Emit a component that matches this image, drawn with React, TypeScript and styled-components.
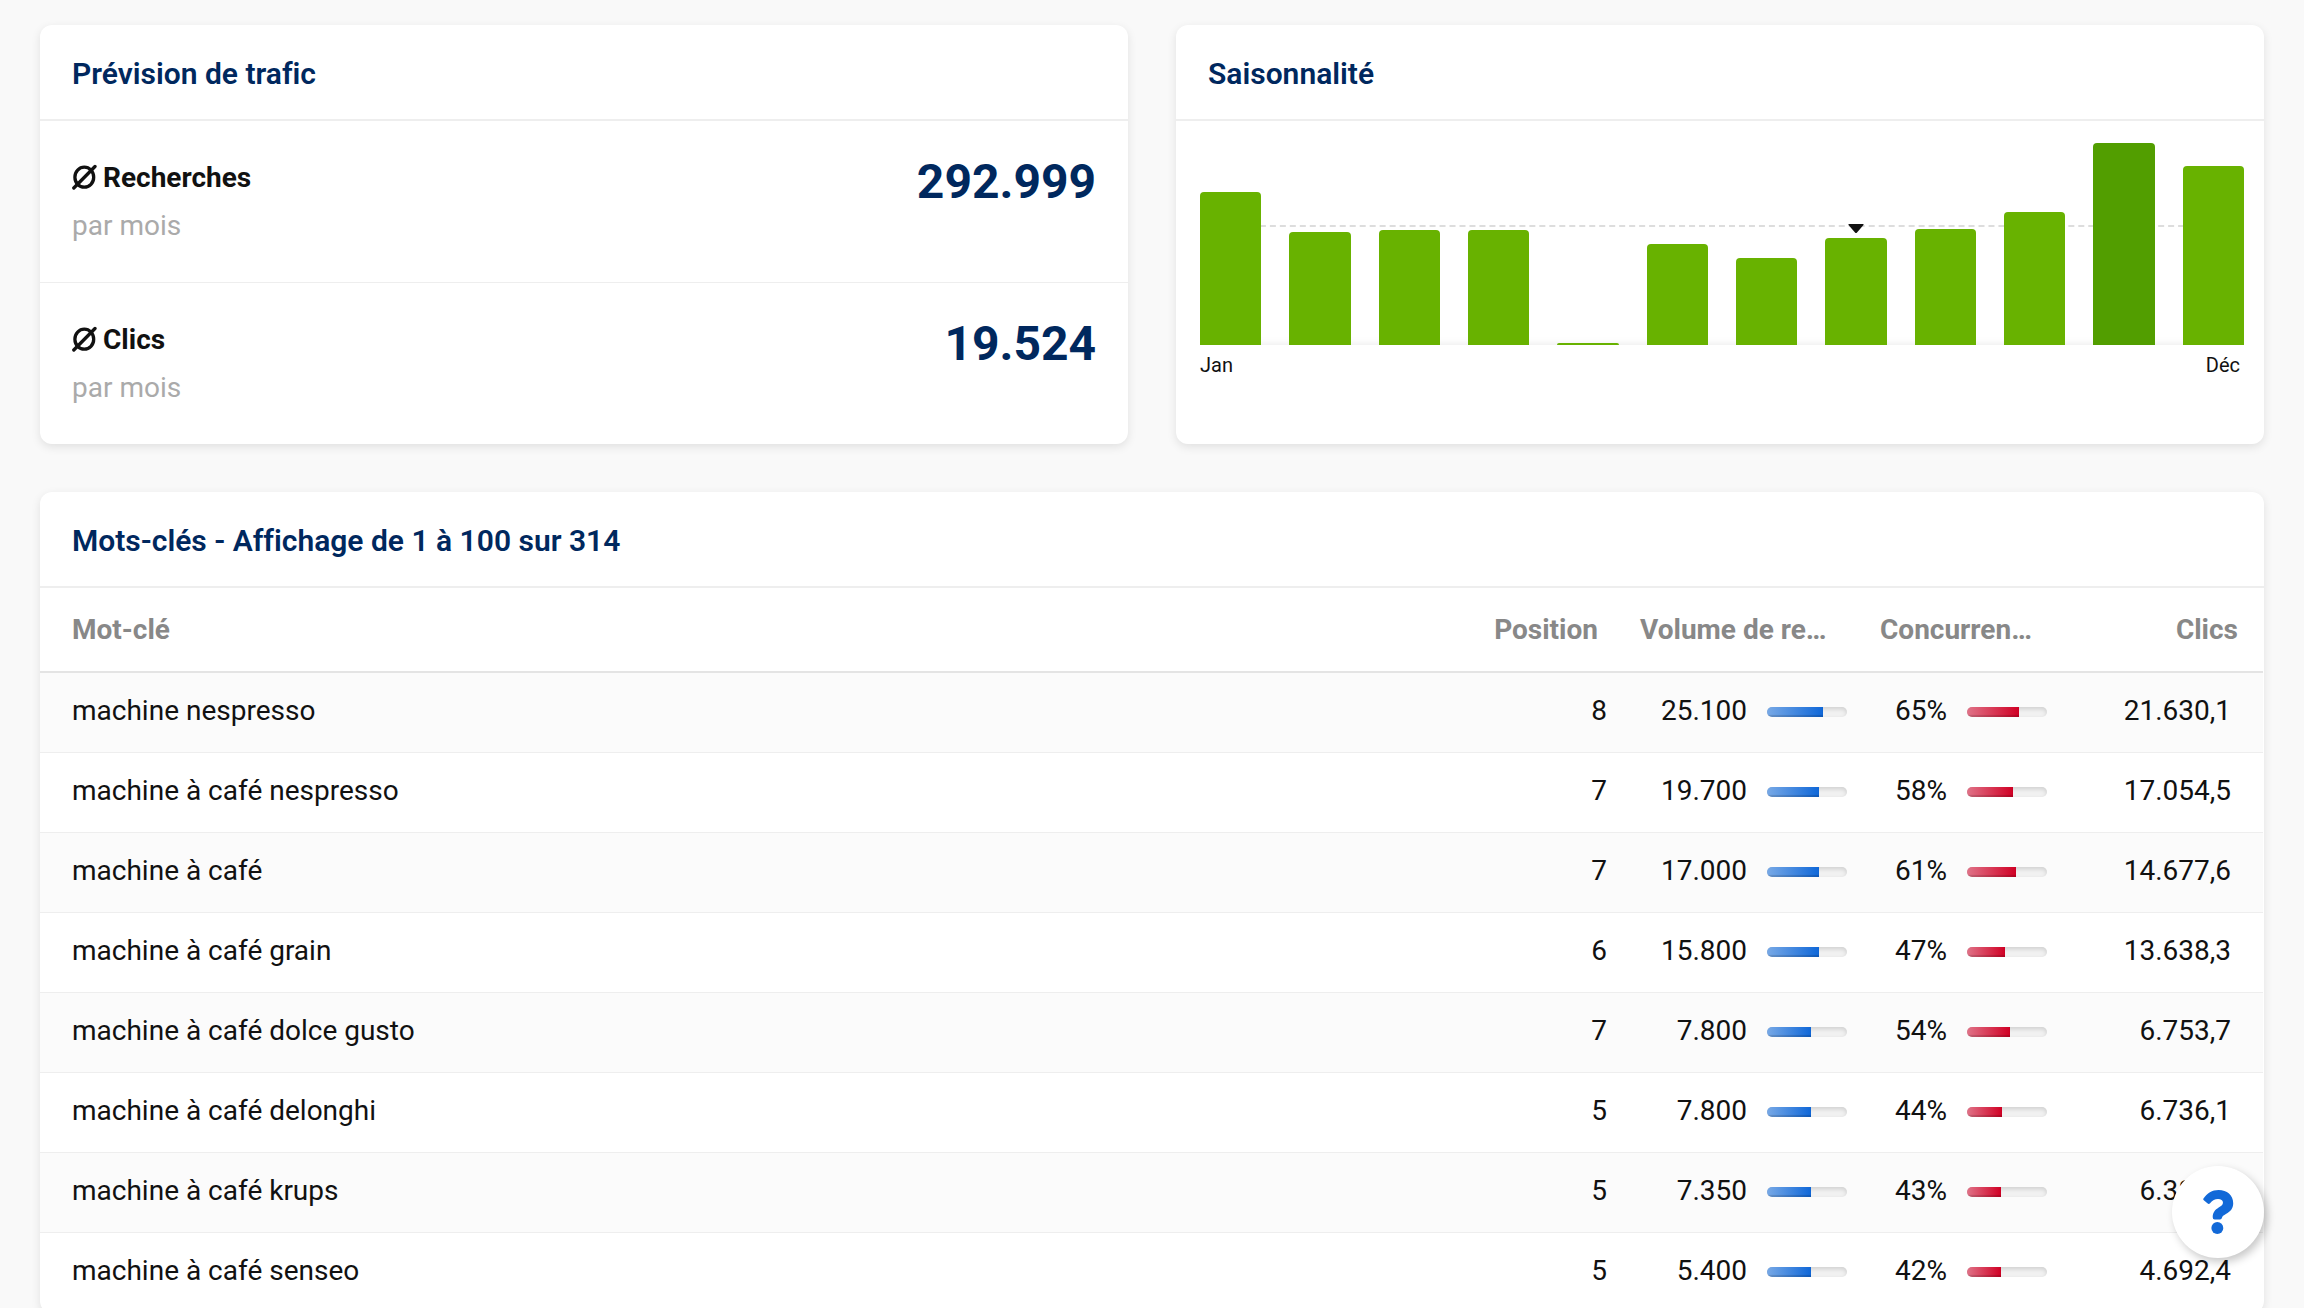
import React from "react";
import styled, { createGlobalStyle } from "styled-components";

const GlobalStyle = createGlobalStyle`
  *, *::before, *::after { box-sizing: border-box; }
  body {
    margin: 0;
    background: #f9f9f9;
    color: #111;
    font-family: Roboto, "Liberation Sans", sans-serif;
    font-size: 28px;
    line-height: 40px;
    -webkit-font-smoothing: antialiased;
  }
`;

const Page = styled.main`
  display: flex;
  flex-direction: column;
  gap: 48px;
  padding: 25px 40px 48px;
`;

const Columns = styled.div`
  display: grid;
  grid-template-columns: 1fr 1fr;
  gap: 48px;
`;

const Card = styled.section`
  background: #fff;
  border-radius: 12px;
  box-shadow: 0 3px 10px rgba(0, 0, 0, 0.1);
`;

const CardTitle = styled.h2`
  margin: 0;
  padding: 29px 32px 25px;
  border-bottom: 2px solid #eee;
  color: #00285e;
  font-size: 30px;
  font-weight: 600;
  font-variant-ligatures: no-common-ligatures;
  line-height: 40px;
`;

const Metric = styled.div`
  display: flex;
  justify-content: space-between;
  padding: 33px 32px 32px;

  & + & {
    border-top: 1px solid #eee;
  }
`;

const MetricName = styled.div`
  display: flex;
  align-items: center;
  gap: 6px;
  height: 48px;
  font-weight: 700;
`;

const MetricUnit = styled.div`
  height: 48px;
  line-height: 48px;
  color: #aaa;
`;

const MetricValue = styled.div`
  color: #00285e;
  font-size: 48px;
  font-weight: 700;
  line-height: 56px;
`;

const Chart = styled.div`
  padding: 22px 20px 0 24px;
`;

const Plot = styled.div`
  position: relative;
  display: grid;
  grid-template-columns: repeat(12, 1fr);
  gap: 28px;
  align-items: end;
  height: 202px;
  box-shadow: inset 0 -10px 8px -10px rgba(0, 0, 0, 0.1);
`;

const Average = styled.div`
  position: absolute;
  left: 0;
  right: 0;
  bottom: 118px;
  border-top: 2px dashed #ddd;
`;

const Bar = styled.div<{ $peak: boolean }>`
  position: relative;
  border-radius: 4px 4px 0 0;
  background: ${(p) => (p.$peak ? "#529e00" : "#68b200")};
`;

const Marker = styled.svg`
  position: absolute;
  left: 50%;
  bottom: 100%;
  width: 16px;
  height: 9px;
  margin: 0 0 5px -8px;
`;

const Axis = styled.div`
  display: flex;
  justify-content: space-between;
  padding: 8px 4px 0 0;
  font-size: 20px;
  line-height: 24px;
`;

const TableWrap = styled.div`
  padding-right: 1px;
`;

const Table = styled.table`
  width: 100%;
  table-layout: fixed;
  border-collapse: separate;
  border-spacing: 0;
`;

const Col = styled.col<{ $width?: number }>`
  width: ${(p) => (p.$width ? `${p.$width}px` : "auto")};
`;

const Th = styled.th<{ $right?: boolean }>`
  height: 85px;
  padding: 0 ${(p) => (p.$right ? 25 : 15)}px 0 17px;
  border-bottom: 2px solid #e4e4e4;
  color: #888;
  font-weight: 700;
  white-space: nowrap;
  text-align: ${(p) => (p.$right ? "right" : "left")};

  &:first-child {
    padding-left: 32px;
  }
`;

const Row = styled.tr`
  &:nth-child(odd) {
    background: #fbfbfb;
  }
`;

const Td = styled.td<{ $right?: boolean }>`
  height: 80px;
  padding: 0 16px 4px;
  border-bottom: 1px solid #eee;
  white-space: nowrap;
  text-align: ${(p) => (p.$right ? "right" : "left")};

  &:first-child {
    padding-left: 32px;
  }

  &:last-child {
    padding-right: 32px;
  }
`;

const Gauge = styled.div`
  display: flex;
  align-items: center;
  justify-content: flex-end;
  gap: 20px;
`;

const Track = styled.div`
  width: 80px;
  height: 10px;
  margin-top: 2px;
  border-radius: 5px;
  overflow: hidden;
  background: #f1f1f1;
  box-shadow: inset 0 2px 4px rgba(0, 0, 0, 0.14);
`;

const Fill = styled.div<{ $tone: "blue" | "red" }>`
  height: 100%;
  box-shadow: inset 0 -2px 1px rgba(0, 0, 0, 0.15);
  background: ${(p) =>
    p.$tone === "blue"
      ? "linear-gradient(90deg, #78a9e6, #0f67d8)"
      : "linear-gradient(90deg, #e07388, #d00024)"};
`;

const HelpButton = styled.button`
  position: fixed;
  right: 40px;
  bottom: 50px;
  display: flex;
  align-items: center;
  justify-content: center;
  width: 92px;
  height: 92px;
  padding: 0;
  border: 0;
  border-radius: 50%;
  background: #fff;
  color: #1269d8;
  box-shadow: 3px 4px 8px rgba(0, 0, 0, 0.22);
  cursor: pointer;
`;

const AverageIcon = () => (
  <svg width="25" height="28" viewBox="0 0 25 28" fill="none" stroke="currentColor" aria-hidden="true">
    <ellipse cx="12.3" cy="13.2" rx="9.4" ry="10" strokeWidth="3.3" />
    <path d="M1.800 24L23 2.500" strokeWidth="3.300" strokeLinecap="round" />
  </svg>
);

const QuestionIcon = () => (
  <svg width="32" height="44" viewBox="38 28 96 133" fill="currentColor" aria-hidden="true">
    <path d="M42 54C53 38 68 28 88 28C113 28 132 43 132 68C132 86 122 93 111 100C102 106 99 107 98 112Q97 117 92 117H76Q70 117 70 110C70 96 77 88 88 81C97 76 101 73 101 66C101 59 95 55 86 55C76 55 70 58 62 68Q58 72 54 68L43 59Q40 57 42 54Z" />
    <circle cx="84" cy="143" r="18" />
  </svg>
);

const metrics = [
  { name: "Recherches", unit: "par mois", value: "292.999" },
  { name: "Clics", unit: "par mois", value: "19.524" },
];

const months = [153, 113, 115, 115, 2, 101, 87, 107, 116, 133, 202, 179];
const peak = Math.max(...months);
const currentMonth = 7;

const keywords = [
  { name: "machine nespresso", position: 8, volume: "25.100", volumeFill: 70, competition: 65, clicks: "21.630,1" },
  { name: "machine à café nespresso", position: 7, volume: "19.700", volumeFill: 65, competition: 58, clicks: "17.054,5" },
  { name: "machine à café", position: 7, volume: "17.000", volumeFill: 65, competition: 61, clicks: "14.677,6" },
  { name: "machine à café grain", position: 6, volume: "15.800", volumeFill: 65, competition: 47, clicks: "13.638,3" },
  { name: "machine à café dolce gusto", position: 7, volume: "7.800", volumeFill: 55, competition: 54, clicks: "6.753,7" },
  { name: "machine à café delonghi", position: 5, volume: "7.800", volumeFill: 55, competition: 44, clicks: "6.736,1" },
  { name: "machine à café krups", position: 5, volume: "7.350", volumeFill: 55, competition: 43, clicks: "6.389,2" },
  { name: "machine à café senseo", position: 5, volume: "5.400", volumeFill: 55, competition: 42, clicks: "4.692,4" },
];

export default function App() {
  return (
    <>
      <GlobalStyle />
      <Page>
        <Columns>
          <Card>
            <CardTitle>Prévision de trafic</CardTitle>
            {metrics.map((m) => (
              <Metric key={m.name}>
                <div>
                  <MetricName>
                    <AverageIcon />
                    {m.name}
                  </MetricName>
                  <MetricUnit>{m.unit}</MetricUnit>
                </div>
                <MetricValue>{m.value}</MetricValue>
              </Metric>
            ))}
          </Card>
          <Card>
            <CardTitle>Saisonnalité</CardTitle>
            <Chart>
              <Plot>
                <Average />
                {months.map((value, i) => (
                  <Bar key={i} $peak={value === peak} style={{ height: `${(value / peak) * 100}%` }}>
                    {i === currentMonth && (
                      <Marker viewBox="0 0 16 9" aria-hidden="true">
                        <path d="M1 0H15Q16 0 15.500 1L9 8.400Q8 9.400 7 8.400L.5 1Q0 0 1 0Z" fill="#111" />
                      </Marker>
                    )}
                  </Bar>
                ))}
              </Plot>
              <Axis>
                <span>Jan</span>
                <span>Déc</span>
              </Axis>
            </Chart>
          </Card>
        </Columns>
        <Card>
          <CardTitle>Mots-clés - Affichage de 1 à 100 sur 314</CardTitle>
          <TableWrap>
            <Table>
              <colgroup>
                <Col />
                <Col $width={160} />
                <Col $width={240} />
                <Col $width={200} />
                <Col $width={200} />
              </colgroup>
              <thead>
                <tr>
                  <Th>Mot-clé</Th>
                  <Th $right>Position</Th>
                  <Th>Volume de re…</Th>
                  <Th>Concurren…</Th>
                  <Th $right>Clics</Th>
                </tr>
              </thead>
              <tbody>
                {keywords.map((k) => (
                  <Row key={k.name}>
                    <Td>{k.name}</Td>
                    <Td $right>{k.position}</Td>
                    <Td>
                      <Gauge>
                        {k.volume}
                        <Track>
                          <Fill $tone="blue" style={{ width: `${k.volumeFill}%` }} />
                        </Track>
                      </Gauge>
                    </Td>
                    <Td>
                      <Gauge>
                        {k.competition}%
                        <Track>
                          <Fill $tone="red" style={{ width: `${k.competition}%` }} />
                        </Track>
                      </Gauge>
                    </Td>
                    <Td $right>{k.clicks}</Td>
                  </Row>
                ))}
              </tbody>
            </Table>
          </TableWrap>
        </Card>
      </Page>
      <HelpButton type="button" aria-label="Aide">
        <QuestionIcon />
      </HelpButton>
    </>
  );
}
